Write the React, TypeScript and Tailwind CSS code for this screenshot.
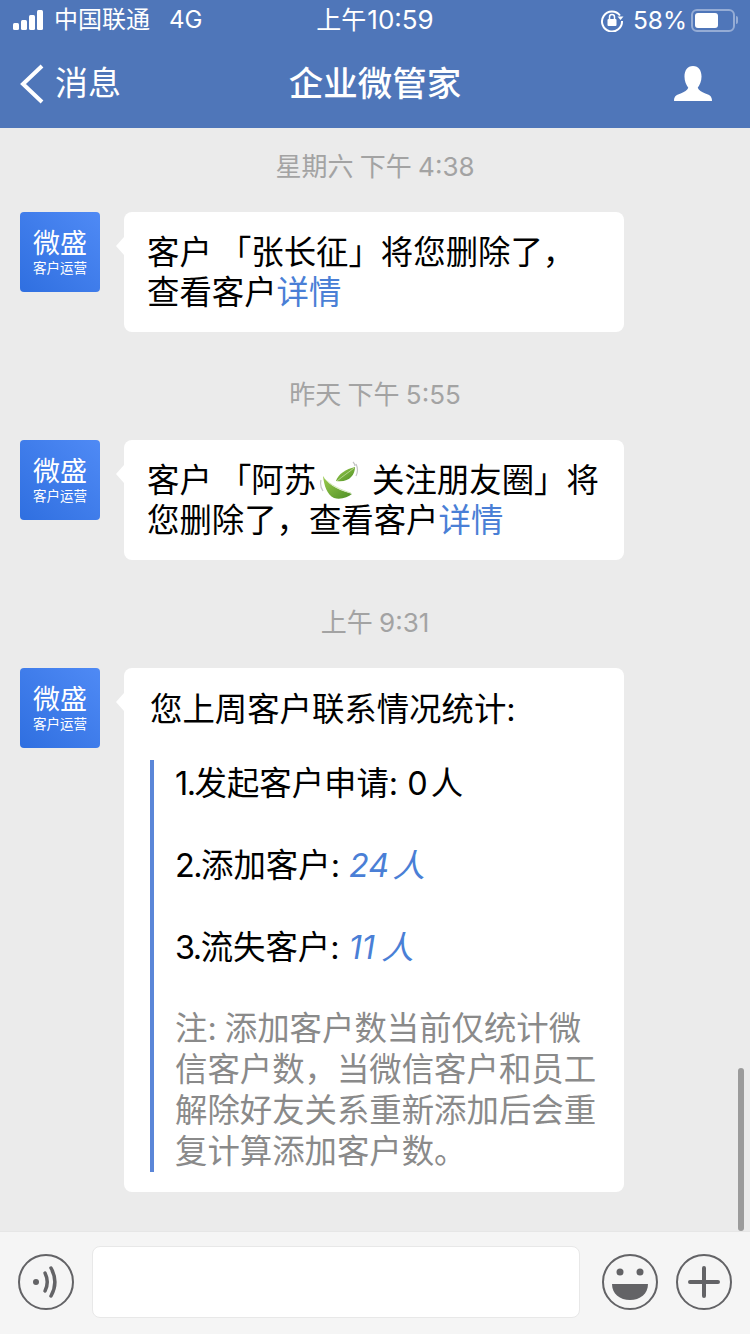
const font = { fontFamily: 'Inter,"Noto Sans CJK SC",sans-serif' };
const COMMA = "\uFF0C";
const NOTE = `注: 添加客户数当前仅统计微信客户数${COMMA}当微信客户和员工解除好友关系重新添加后会重复计算添加客户数。`;

function Avatar() {
  return (
    <div className="flex h-20 w-20 shrink-0 flex-col items-center rounded-[4px] bg-gradient-to-tr from-[#2f6fe0] to-[#4f8af5] pt-[15px] text-white">
      <div className="text-[27px] leading-[34px]">微盛</div>
      <div className="mt-[-1px] text-[13.5px] leading-[16px]">客户运营</div>
    </div>
  );
}

function Bubble({ children, cls }: { children: React.ReactNode; cls: string }) {
  return (
    <div className={`relative ml-6 w-[500px] rounded-[8px] bg-white ${cls}`}>
      <div className="absolute left-[-8px] top-[25px] h-0 w-0 border-y-[9px] border-r-[8px] border-y-transparent border-r-white" />
      {children}
    </div>
  );
}

function Time({ children }: { children: React.ReactNode }) {
  return <div className="flex h-[28px] items-center justify-center text-[26px] text-[#a3a3a3] [word-spacing:-1px]">{children}</div>;
}

function Leaf() {
  return (
    <svg viewBox="0 0 40 40" className="ml-[3px] mr-[13px] inline-block h-[40px] w-[40px] align-[-9px]">
      <defs>
        <linearGradient id="lf" x1="0" y1="0" x2="1" y2="1">
          <stop offset="0" stopColor="#9ccb4e" />
          <stop offset="1" stopColor="#4d8f24" />
        </linearGradient>
      </defs>
      <path d="M17 20c2-7 10-12 19-14 0 8-6 16-19 14z" fill="url(#lf)" />
      <path d="M18 20c6-5 12-9 17-13" stroke="#c5e1a5" strokeWidth="0.8" fill="none" />
      <path d="M4 15C5 24 8 34 15 37c7 2 14-1 18-4C24 30 10 26 4 15z" fill="url(#lf)" />
      <path d="M5 17c6 7 17 12 27 15" stroke="#c5e1a5" strokeWidth="0.8" fill="none" />
      <path d="M2 19c-1 4 0 8 2 11M37 3c2 4 2 8 0 12M34 1c1 1 2 2 2 4" stroke="#c4c4c4" strokeWidth="1.2" fill="none" />
    </svg>
  );
}

export default function App() {
  return (
    <div style={font} className="relative flex h-[1334px] w-[750px] flex-col overflow-hidden bg-[#ebebeb] text-black">
      <header className="h-[128px] shrink-0 bg-[#4f76b9] text-white">
        <div className="relative flex h-10 items-center justify-between pl-[13px] pr-[12px] text-[25px]">
          <div className="flex items-center">
            <div className="flex items-end gap-[2px]">
              <span className="h-[7px] w-[6px] rounded-[1.5px] bg-white" />
              <span className="h-[10px] w-[6px] rounded-[1.5px] bg-white" />
              <span className="h-[15px] w-[6px] rounded-[1.5px] bg-white" />
              <span className="h-[20px] w-[6px] rounded-[1.5px] bg-white" />
            </div>
            <span className="ml-[11px] text-[24px]">中国联通</span>
            <span className="ml-[19px] text-[24px]">4G</span>
          </div>
          <div className="absolute left-0 right-0 text-center text-[25px] font-normal [word-spacing:-6px]">上午 <span className="text-[26px]">10:59</span></div>
          <div className="flex items-center">
            <svg viewBox="0 0 24 24" className="h-[24px] w-[24px]" fill="none">
              <path d="M20 7.5A10 10 0 1 0 22 13" stroke="#fff" strokeWidth="2" />
              <path d="M17.5 8.5h6l-3 3.5z" fill="#fff" />
              <rect x="7.5" y="11" width="9" height="7" rx="1" fill="#fff" />
              <path d="M9.5 11V9a2.5 2.5 0 0 1 5 0v2" stroke="#fff" strokeWidth="1.5" />
            </svg>
            <span className="ml-[9px] text-[24.5px]">58%</span>
            <div className="ml-[4px] flex h-[23px] w-[44px] items-center rounded-[6px] border-2 border-white/40 p-[2px]">
              <div className="h-[15px] w-[23px] rounded-[3px] bg-white" />
            </div>
            <div className="ml-[1px] h-[8px] w-[2px] rounded-r bg-white/40" />
          </div>
        </div>
        <nav className="relative flex h-[88px] items-center justify-between">
          <div className="flex items-center pl-[20px]">
            <svg viewBox="0 0 24 40" className="h-[40px] w-[24px]" fill="none">
              <path d="M22 2 3 20l19 18" stroke="#fff" strokeWidth="4" />
            </svg>
            <span className="ml-[11px] text-[33px]">消息</span>
          </div>
          <div className="absolute left-0 right-0 text-center text-[34.5px] font-medium">企业微管家</div>
          <svg viewBox="0 0 40 38" className="mr-[37px] h-[36px] w-[40px]" fill="#fff">
            <path d="M20 0c6 0 9 5 9 11 0 5-2 9-4 12 1 3 4 4 8 6 4 1 7 3 7 7v1H0v-1c0-4 3-6 7-7 4-2 7-3 8-6-2-3-4-7-4-12 0-6 3-11 9-11z" />
          </svg>
        </nav>
      </header>

      <main className="flex-1 pt-6">
        <Time>星期六 下午 4:38</Time>
        <section className="mt-[32px] flex pl-5">
          <Avatar />
          <Bubble cls="h-[120px] pl-[23px] pr-4 pt-[21px] text-[32.4px] leading-[40px] [word-spacing:-2px]">
            {`客户 「张长征」将您删除了${COMMA}`}<br />
            查看客户<span className="text-[#4a7fd6]">详情</span>
          </Bubble>
        </section>
        <div className="mt-[48px]"><Time>昨天 下午 5:55</Time></div>
        <section className="mt-[32px] flex pl-5">
          <Avatar />
          <Bubble cls="h-[120px] pl-[23px] pr-4 pt-[21px] text-[32.4px] leading-[40px] [word-spacing:-2px]">
            客户 「阿苏<Leaf />关注朋友圈」将<br />
            {`您删除了${COMMA}查看客户`}<span className="text-[#4a7fd6]">详情</span>
          </Bubble>
        </section>
        <div className="mt-[48px]"><Time>上午 9:31</Time></div>
        <section className="mt-[32px] flex pl-5">
          <Avatar />
          <Bubble cls="h-[524px] pl-[26px] pt-[22px] text-[32.4px]">
            <div className="h-[40px] leading-[40px]">您上周客户联系情况统计:</div>
            <div className="mt-[30px] h-[412px] border-l-4 border-[#5b86d8] pl-[21px]">
              <div className="h-[82px] pt-[4px] leading-[40px]"><span className="tracking-[-1.5px]">1.</span>发起客户申请: <span className="[word-spacing:-6px]">0 人</span></div>
              <div className="h-[82px] pt-[4px] leading-[40px]"><span className="tracking-[-1.5px]">2.</span>添加客户: <span className="italic text-[#4a7fd6] [word-spacing:-6px]">24 人</span></div>
              <div className="h-[82px] pt-[4px] leading-[40px]"><span className="tracking-[-1.5px]">3.</span>流失客户: <span className="italic text-[#4a7fd6] [word-spacing:-3px]">11 人</span></div>
              <div className="w-[430px] pt-[2px] text-[#8a8a8a] leading-[41px] [word-spacing:-1px]">{NOTE}</div>
            </div>
          </Bubble>
        </section>
      </main>

      <div className="absolute right-[6px] top-[1068px] h-[163px] w-[6px] rounded-[3px] bg-[#9b9b9b]" />

      <footer className="flex h-[103px] shrink-0 items-start border-t border-[#e6e6e6] bg-[#f5f5f5] pl-[18px] pt-[14px]">
        <svg viewBox="0 0 56 56" className="mt-[8px] h-[56px] w-[56px]" fill="none" stroke="#636366" strokeWidth="2">
          <circle cx="28" cy="28" r="27" />
          <circle cx="18" cy="28" r="3" fill="#636366" stroke="none" />
          <path d="M27 19c3 6 3 12 0 18" strokeWidth="3.5" strokeLinecap="round" />
          <path d="M33 14c5 9 5 19 0 28" strokeWidth="3.5" strokeLinecap="round" />
        </svg>
        <div className="ml-[18px] h-[72px] w-[488px] rounded-[8px] border border-[#e8e8e8] bg-white" />
        <svg viewBox="0 0 56 56" className="ml-[22px] mt-[8px] h-[56px] w-[56px]" fill="none" stroke="#636366" strokeWidth="2">
          <circle cx="28" cy="28" r="27" />
          <circle cx="18" cy="18" r="3.5" fill="#636366" stroke="none" />
          <circle cx="38" cy="18" r="3.5" fill="#636366" stroke="none" />
          <path d="M10 30h36c0 10-8 16-18 16s-18-6-18-16z" fill="#636366" stroke="none" />
        </svg>
        <svg viewBox="0 0 56 56" className="ml-[18px] mt-[8px] h-[56px] w-[56px]" fill="none" stroke="#636366" strokeWidth="2">
          <circle cx="28" cy="28" r="27" />
          <path d="M28 14v28M14 28h28" strokeWidth="4" strokeLinecap="round" />
        </svg>
      </footer>
    </div>
  );
}
